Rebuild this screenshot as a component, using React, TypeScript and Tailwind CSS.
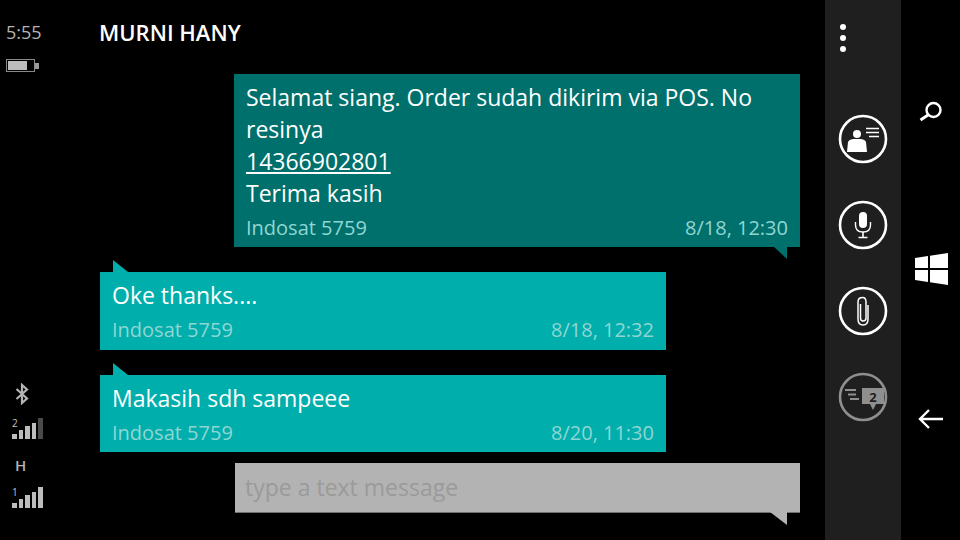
import React from "react";

const Ring = ({ dim, children }: { dim?: boolean; children: React.ReactNode }) => (
  <svg width="50" height="50" viewBox="0 0 50 50" className={dim ? "opacity-50" : ""}>
    <circle cx="25" cy="25" r="23" fill="none" stroke="white" strokeWidth="2.6" />
    {children}
  </svg>
);

const Bars = ({ n, lit }: { n: string; lit: number }) => (
  <div className="relative flex items-end gap-[2px] h-[21px] w-[31px] ml-[6px]">
    <span className="absolute left-0 top-0 text-[10px] leading-[10px] text-[#c0c0c0] font-['Open_Sans',sans-serif]">{n}</span>
    {[5, 9, 13, 16, 21].map((h, i) => (
      <div
        key={i}
        className={i < lit ? "w-[5px] bg-[#bdbdbd]" : "w-[5px] bg-[#4a4a4a]"}
        style={{ height: h }}
      />
    ))}
  </div>
);

const Bubble = ({ text, date, sim = "Indosat 5759" }: { text: React.ReactNode; date: string; sim?: string }) => (
  <>
    <div className="text-white text-[23px] leading-[32px]">{text}</div>
    <div className="flex justify-between text-[20px] leading-[28px] text-[#8fd6d3] mt-[5px]">
      <span>{sim}</span>
      <span>{date}</span>
    </div>
  </>
);

export default function App() {
  return (
    <div className="flex h-[540px] w-[960px] overflow-hidden bg-black font-['Open_Sans',sans-serif]">
      {/* status column */}
      <div className="w-[100px] flex flex-col pl-[6px] pt-[20px] pb-[32px]">
        <div className="text-[#b4b4b4] text-[18px] leading-[24px]">5:55</div>
        <div className="flex items-center mt-[15px]">
          <div className="w-[29px] h-[13px] border border-[#8a8a8a] p-[1px]">
            <div className="h-full w-[19px] bg-[#bdbdbd]" />
          </div>
          <div className="w-[4px] h-[6px] bg-[#9a9a9a]" />
        </div>
        <div className="mt-auto flex flex-col items-start">
          <svg width="14" height="22" viewBox="0 0 14 22" className="ml-[9px]" fill="none" stroke="#b4b4b4" strokeWidth="2.2">
            <path d="M1.5 6 L12 15.5 L7 20 V2 L12 6.5 L1.5 16" />
          </svg>
          <div className="mt-[13px]"><Bars n="2" lit={4} /></div>
          <div className="mt-[16px] ml-[9px] text-[#b4b4b4] text-[15px] leading-[20px] font-semibold">H</div>
          <div className="mt-[12px]"><Bars n="1" lit={5} /></div>
        </div>
      </div>

      {/* conversation */}
      <div className="w-[725px] pr-[25px]">
        <div className="h-[74px] pt-[15px] text-white text-[22px] leading-[34px] font-semibold -ml-px">MURNI HANY</div>

        <div className="relative ml-[134px] h-[173px] bg-[#00706c] px-[12px] pt-[7px]">
          <Bubble
            text={
              <>
                Selamat siang. Order sudah dikirim via POS. No
                <br />
                resinya
                <br />
                <span className="underline">14366902801</span>
                <br />
                Terima kasih
              </>
            }
            date="8/18, 12:30"
          />
          <div className="absolute right-[13px] top-full w-0 h-0 border-t-[12px] border-t-[#00706c] border-l-[13px] border-l-transparent" />
        </div>

        <div className="relative w-[566px] h-[78px] mt-[25px] bg-[#00aeac] px-[12px] pt-[7px]">
          <Bubble text="Oke thanks...." date="8/18, 12:32" />
          <div className="absolute left-[13px] bottom-full w-0 h-0 border-b-[12px] border-b-[#00aeac] border-r-[15px] border-r-transparent" />
        </div>

        <div className="relative w-[566px] h-[77px] mt-[25px] bg-[#00aeac] px-[12px] pt-[7px]">
          <Bubble text="Makasih sdh sampeee" date="8/20, 11:30" />
          <div className="absolute left-[13px] bottom-full w-0 h-0 border-b-[12px] border-b-[#00aeac] border-r-[15px] border-r-transparent" />
        </div>

        <div className="relative ml-[135px] h-[50px] mt-[11px] bg-[#b3b3b3] border-b border-[#6f6f6f] px-[10px] pt-[8px] text-[23px] leading-[32px] text-[#9a9a9a]">
          type a text message
          <div className="absolute right-[13px] top-full w-0 h-0 border-t-[13px] border-t-[#b3b3b3] border-l-[17px] border-l-transparent" />
        </div>
      </div>

      {/* app bar */}
      <div className="w-[76px] bg-[#1f1f1f] flex flex-col pl-[13px]">
        <div className="flex flex-col gap-[5px] pt-[24px] pl-[2px] h-[114px]">
          <div className="w-[6px] h-[6px] rounded-full bg-white" />
          <div className="w-[6px] h-[6px] rounded-full bg-white" />
          <div className="w-[6px] h-[6px] rounded-full bg-white" />
        </div>
        <div className="flex flex-col gap-[36px]">
          <Ring>
            <circle cx="19" cy="20" r="4" fill="white" />
            <path d="M9 38 L10 28 Q11 25.5 15 25 L23 25 Q27 25.5 28 28 L29 38 Z" fill="white" />
            <path d="M28 14.5H41M28 18.5H41M31 22.5H41" stroke="white" strokeWidth="1.6" />
          </Ring>
          <Ring>
            <rect x="21" y="12" width="8" height="16" rx="4" fill="white" />
            <path d="M17.5 22 V25 Q17.5 32 25 32 Q32.5 32 32.5 25 V22" fill="none" stroke="white" strokeWidth="1.4" />
            <path d="M25 32V37M20.5 37.5H29.5" stroke="white" strokeWidth="1.6" />
          </Ring>
          <Ring>
            <path d="M30 19 V33 Q30 39 25 39 Q20 39 20 33 V16 Q20 11.5 24.5 11.5 Q28 11.5 28 16 V32 Q28 35 25 35 Q22.5 35 22.5 32 V18" fill="none" stroke="white" strokeWidth="1.5" />
          </Ring>
          <Ring dim>
            <path d="M7 18H18M10 22.5H18M12 27H21" stroke="white" strokeWidth="1.8" />
            <path d="M24 16H46V32H38L35 38L32 32H24Z" fill="white" />
            <text x="35" y="30" textAnchor="middle" fontSize="13" fontWeight="700" fill="#1f1f1f">2</text>
          </Ring>
        </div>
      </div>

      {/* nav bar */}
      <div className="flex-1 flex flex-col items-center pt-[101px] pl-[1px]">
        <svg width="26" height="24" viewBox="0 0 26 24" fill="none" stroke="white" strokeWidth="2.4">
          <circle cx="15.5" cy="9" r="7" />
          <path d="M10 14 L2.5 19" strokeWidth="3" />
        </svg>
        <svg width="33" height="32" viewBox="0 0 33 32" fill="white" className="mt-[128px]">
          <path d="M0 5 L13 3 V15 H0 Z M15 2.700 L33 0 V15 H15 Z M0 17 H13 V29 L0 27 Z M15 17 H33 V32 L15 29.300 Z" />
        </svg>
        <svg width="26" height="22" viewBox="0 0 26 22" fill="none" stroke="white" strokeWidth="2.4" className="mt-[123px]">
          <path d="M25 11H3M11 2L2 11L11 20" />
        </svg>
      </div>
    </div>
  );
}
